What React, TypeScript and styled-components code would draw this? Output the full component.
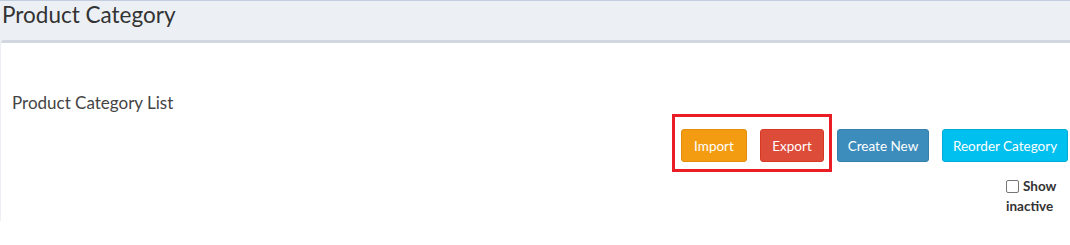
import React from "react";
import styled, { createGlobalStyle } from "styled-components";

const Global = createGlobalStyle`
  html, body { margin: 0; padding: 0; background: #ffffff; }
  body { font-family: "Lato", "Noto Sans", sans-serif; color: #333333; }
  * { box-sizing: border-box; }
`;

const Page = styled.div`
  position: relative;
  width: 1070px;
`;

const Header = styled.div`
  height: 40px;
  background: #ecf0f5;
  border-top: 1px solid #c3cde0;
  padding-left: 2px;
`;

const Title = styled.h1`
  margin: 0;
  font-size: 22.5px;
  font-weight: 400;
  line-height: 28px;
  color: #333333;
`;

const Content = styled.div`
  background: #ecf0f5;
  padding-left: 1px;
`;

const Box = styled.div`
  height: 181px;
  background: #ffffff;
  border-top: 3px solid #d2d6de;
  border-radius: 3px 0 0 0;
  padding: 50px 2px 0 11px;
  display: flex;
  flex-direction: column;
`;

const BoxTitle = styled.h3`
  margin: 0;
  font-size: 17px;
  font-weight: 400;
  line-height: 20px;
  color: #444444;
`;

const Actions = styled.div`
  display: flex;
  justify-content: flex-end;
  gap: 13px;
  margin-top: 16px;
`;

const Btn = styled.button<{ $bg: string; $border: string; $w: number }>`
  width: ${(p) => p.$w}px;
  height: 33px;
  padding: 0;
  font-family: inherit;
  font-size: 13.5px;
  color: #ffffff;
  background: ${(p) => p.$bg};
  border: 1px solid ${(p) => p.$border};
  border-radius: 3px;
  white-space: nowrap;
  cursor: pointer;
`;

const Filter = styled.div`
  display: flex;
  justify-content: flex-end;
  margin-top: 14px;
`;

const CheckLabel = styled.label`
  width: 62px;
  font-size: 13.5px;
  font-weight: 700;
  line-height: 20px;
  color: #333333;
`;

const CheckBox = styled.span`
  display: inline-block;
  width: 13px;
  height: 13px;
  border: 1.5px solid #767676;
  border-radius: 2px;
  background: #ffffff;
  vertical-align: -2px;
  margin-right: 4px;
`;

const Highlight = styled.div`
  position: absolute;
  left: 672px;
  top: 114px;
  width: 160px;
  height: 58px;
  border: 3px solid #ea1c24;
  pointer-events: none;
`;

export default function App() {
  return (
    <Page>
      <Global />
      <Header>
        <Title>Product Category</Title>
      </Header>
      <Content>
        <Box>
          <BoxTitle>Product Category List</BoxTitle>
          <Actions>
            <Btn $bg="#f39c12" $border="#e08e0b" $w={66}>Import</Btn>
            <Btn $bg="#dd4b39" $border="#d73925" $w={64}>Export</Btn>
            <Btn $bg="#3c8dbc" $border="#367fa9" $w={92}>Create New</Btn>
            <Btn $bg="#00c0ef" $border="#00acd6" $w={126}>Reorder Category</Btn>
          </Actions>
          <Filter>
            <CheckLabel>
              <CheckBox />
              Show inactive
            </CheckLabel>
          </Filter>
        </Box>
      </Content>
      <Highlight />
    </Page>
  );
}
